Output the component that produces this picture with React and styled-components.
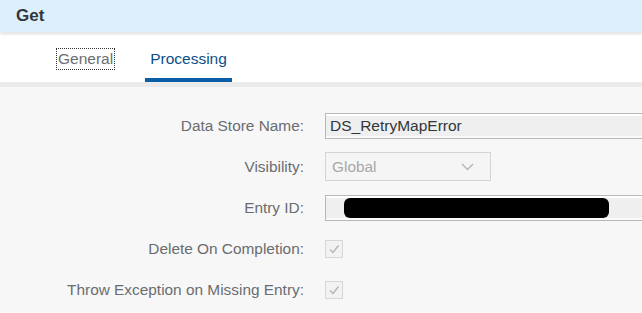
import styled, { createGlobalStyle } from 'styled-components';

const GlobalStyle = createGlobalStyle`
  html, body {
    margin: 0;
    padding: 0;
    background: #f7f7f7;
    font-family: "Liberation Sans", Arial, sans-serif;
  }
`;

const Page = styled.div`
  width: 642px;
  height: 313px;
  overflow: hidden;
  background: #f7f7f7;
`;

const Header = styled.div`
  height: 32px;
  background: #ddeffd;
  display: flex;
  align-items: center;
  padding-left: 16px;
  box-shadow: 0 2px 3px rgba(0, 0, 0, 0.08);
  position: relative;
  z-index: 1;
`;

const Title = styled.h1`
  margin: 0;
  font-size: 17px;
  font-weight: 700;
  color: #32363a;
`;

const TabBar = styled.div`
  margin-top: 3px;
  height: 47px;
  background: #fff;
  display: flex;
  align-items: stretch;
  padding-left: 57px;
  gap: 31px;
  border-bottom: 5px solid #ebebeb;
`;

const Tab = styled.div`
  display: flex;
  align-items: center;
  padding: 0 ${(p) => (p.$active ? '4px' : '0')};
  font-size: 15.5px;
  color: ${(p) => (p.$active ? '#0a4f8a' : '#6a6d70')};
  border-bottom: 4px solid ${(p) => (p.$active ? '#0a5ea6' : 'transparent')};
  padding-top: 4px;
  span {
    padding: 1px 1px;
    outline: ${(p) => (p.$focus ? '1px dotted #333' : 'none')};
  }
`;

const Form = styled.div`
  display: grid;
  grid-template-columns: 304px 1fr;
  grid-auto-rows: 41px;
  column-gap: 21px;
  padding-top: 18px;
  align-items: center;
`;

const Label = styled.div`
  text-align: right;
  font-size: 15.4px;
  color: #6a6d70;
  white-space: nowrap;
`;

const Input = styled.div`
  height: 26px;
  box-sizing: border-box;
  display: flex;
  align-items: center;
  padding-left: 4px;
  background: #efefef;
  border: 1px solid #b8b8b8;
  box-shadow: inset 0 2px 0 #fff, inset 0 -2px 0 #fafafa;
  font-size: 15.5px;
  color: #32363a;
  margin-right: -2px;
`;

const Select = styled.div`
  width: 166px;
  height: 29px;
  box-sizing: border-box;
  display: flex;
  align-items: center;
  justify-content: space-between;
  padding: 0 16px 0 6px;
  background: #f5f5f5;
  border: 1px solid #d4d4d4;
  font-size: 15.4px;
  color: #a8a8a8;
`;

const Redacted = styled.div`
  margin-left: 14px;
  width: 265px;
  height: 20px;
  background: #000;
  border-radius: 6px;
`;

const Check = styled.div`
  width: 18px;
  height: 18px;
  box-sizing: border-box;
  border: 1px solid #d6d6d6;
  background: #f2f2f2;
  display: flex;
  align-items: center;
  justify-content: center;
`;

function CheckMark() {
  return (
    <svg width="12" height="12" viewBox="0 0 12 12">
      <path d="M2 6.5 L5 9.5 L10.5 2.5" stroke="#b5b5b5" strokeWidth="1.4" fill="none" />
    </svg>
  );
}

function Chevron() {
  return (
    <svg width="13" height="8" viewBox="0 0 13 8">
      <path d="M1 1 L6.5 6.5 L12 1" stroke="#b3b3b3" strokeWidth="1.3" fill="none" />
    </svg>
  );
}

export default function App() {
  return (
    <Page>
      <GlobalStyle />
      <Header>
        <Title>Get</Title>
      </Header>
      <TabBar>
        <Tab $focus><span>General</span></Tab>
        <Tab $active><span>Processing</span></Tab>
      </TabBar>
      <Form>
        <Label>Data Store Name:</Label>
        <Input>DS_RetryMapError</Input>

        <Label>Visibility:</Label>
        <Select>
          <span>Global</span>
          <Chevron />
        </Select>

        <Label>Entry ID:</Label>
        <Input>
          <Redacted />
        </Input>

        <Label>Delete On Completion:</Label>
        <div>
          <Check><CheckMark /></Check>
        </div>

        <Label>Throw Exception on Missing Entry:</Label>
        <div>
          <Check><CheckMark /></Check>
        </div>
      </Form>
    </Page>
  );
}
